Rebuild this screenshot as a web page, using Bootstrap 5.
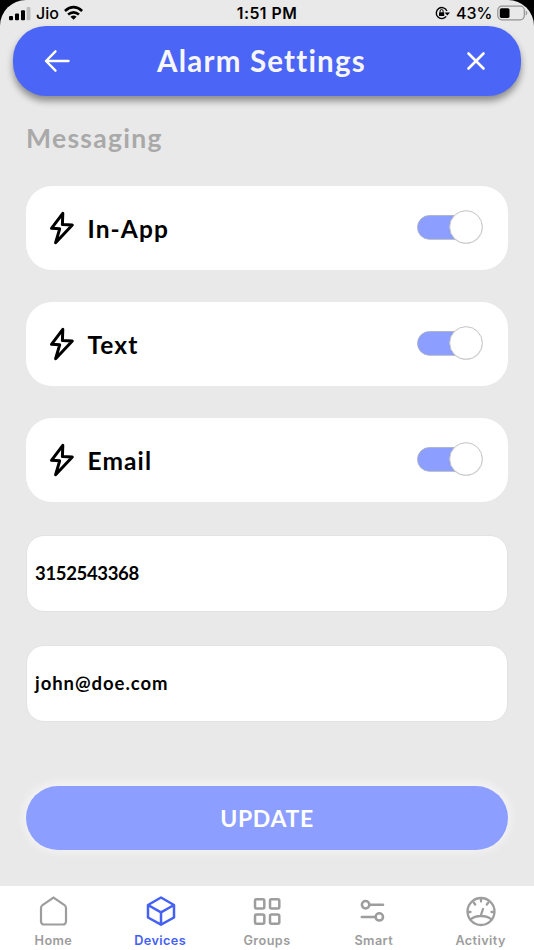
<!DOCTYPE html>
<html lang="en">
<head>
<meta charset="utf-8">
<meta name="viewport" content="width=device-width, initial-scale=1">
<title>Alarm Settings</title>
<link href="https://cdn.jsdelivr.net/npm/bootstrap@5.3.0/dist/css/bootstrap.min.css" rel="stylesheet">
<style>
body{background:#000;color:#000;font-family:Lato,"Open Sans",sans-serif;overflow:hidden}
.screen{height:950px;background:#e9e9e9;border-radius:26px 26px 0 0;overflow:hidden}
.status{height:26px;font-family:Inter,sans-serif;font-size:16px;line-height:27px}
.status>div{height:26px}
.clock{font-weight:600;font-size:15.8px;letter-spacing:.5px}
.carrier{margin-left:5px;margin-right:5px;font-weight:500}
.battery{margin-left:6px;margin-right:4px;font-weight:500}
.power{padding-right:6.5px}
.topbar{height:70px;margin:0 13px;border-radius:33px;background:#4b65f6;color:#f7f7fb;box-shadow:0 5px 7px rgba(0,0,0,.4);padding:0 33px 0 31px}
.topbar h1{font-size:29.5px;font-weight:700;line-height:70px;letter-spacing:1.2px;padding-right:12px}
.plain{background:none;border:0;color:#fff;padding:0;line-height:0}
.content{padding:0 26px}
.content h2{font-size:26.5px;font-weight:700;line-height:36px;letter-spacing:1.3px;color:#a9a9a9;margin:24px 0 30px}
.option{height:84px;border-radius:26px;background:#fff;padding:0 25px 0 21.5px;margin-bottom:32.2px}
.option label{font-size:24.5px;font-weight:700;line-height:30px;letter-spacing:1.1px;margin:1px 0 0 13px}
.toggle{width:67px;height:36px;margin-top:-2px}
.field{height:77px;border:1px solid #e2e2e2;border-radius:18px;background:#fff!important;color:#000!important;font-size:18.5px;font-weight:700;padding:0 8px 0 4px;text-indent:4px;box-shadow:none!important;margin-bottom:33px}
.phone{letter-spacing:-.35px}
.mail{letter-spacing:.95px}
.update{height:64px;border:0;border-radius:32px;background:#8c9eff!important;color:#fff!important;font-size:23px;font-weight:700;letter-spacing:.65px;margin-top:64px;padding:2px 0 0;box-shadow:0 -1px 10px 3px rgba(255,255,255,.5)}
.tabs{height:64px;background:#fff;font-family:Inter,sans-serif;font-size:12.7px;font-weight:600;letter-spacing:.4px}
.tabs a{width:20%;color:#9d9d9d;text-decoration:none;padding-top:9px;line-height:18px}
.tabs a.active{color:#4560f5}
.tabs svg{margin-bottom:4.5px}
svg{display:block;flex-shrink:0}
</style>
<script src="https://cdn.jsdelivr.net/npm/bootstrap@5.3.0/dist/js/bootstrap.bundle.min.js"></script>
</head>
<body>
<svg width="0" height="0" class="position-absolute"><defs>
<g id="bolt"><path d="M14.8 2.3 3.5 17.3l8.2.5-4.1 13.9L24.3 14l-9.9-.5Z" fill="none" stroke="#000" stroke-width="3" stroke-linejoin="round"/></g>
<g id="switch"><rect x="1.500" y="6.500" width="55" height="23.800" rx="11.900" fill="#8c9eff" stroke="#aaaebd" stroke-width=".8"/><circle cx="50" cy="18.300" r="16.800" fill="#777" opacity=".25"/><circle cx="50" cy="18" r="16.300" fill="#fff" stroke="#c8c8ca" stroke-width="1"/></g>
</defs></svg>
<div class="screen d-flex flex-column">
  <div class="status d-flex">
    <div class="d-flex align-items-center col-4 ps-2">
      <svg width="23" height="16" viewBox="0 0 23 16"><rect x="1" y="11" width="4" height="4.300" rx="1"/><rect x="7" y="8.500" width="4" height="6.800" rx="1"/><rect x="13" y="5.300" width="4" height="10" rx="1"/><rect x="18.700" y="2" width="3.700" height="13.300" rx="1" fill="#bcbcbc"/></svg>
      <span class="carrier">Jio</span>
      <svg width="21" height="16" viewBox="1 0 22 16" fill="none" stroke="#000" stroke-width="2.800"><path d="M2 5.800Q11-1.900 20 5.800M5.300 9.600Q11 4.900 16.700 9.600"/><path d="M7.800 12Q11 9.400 14.200 12L11 15.200Z" fill="#000" stroke="none"/></svg>
    </div>
    <div class="clock col-4 text-center">1:51 PM</div>
    <div class="power d-flex align-items-center justify-content-end col-4">
      <svg width="15" height="14" viewBox="0 0 15 14"><path d="M11.200 10.400A5.500 5.500 0 1 1 11.900 5" fill="none" stroke="#000" stroke-width="1.400"/><path d="M9.600 6.400H15L12.300 9.600Z"/><rect x="4" y="6.200" width="5.200" height="3.800" rx=".6"/><path d="M5.100 6.500V5a1.500 1.500 0 0 1 3 0v1.500" fill="none" stroke="#000"/></svg>
      <span class="battery">43%</span>
      <svg width="31" height="16" viewBox="0 0 31 16"><rect x=".8" y="1.200" width="26.500" height="13.600" rx="4" fill="none" stroke="#929292" stroke-width="1.200"/><rect x="2.800" y="3.200" width="9.700" height="9.700" rx="1.600"/><path d="M28.700 5.500c2.100.8 2.100 4.200 0 5Z" fill="#999"/></svg>
    </div>
  </div>
  <header class="topbar d-flex align-items-center justify-content-between">
    <button class="plain" aria-label="Back"><svg width="27" height="24" viewBox="0 0 27 24" fill="none" stroke="currentColor" stroke-width="2.400" stroke-linecap="round" stroke-linejoin="round"><path d="M24.500 12H2M11.500 2.300 2 12l9.500 9.700"/></svg></button>
    <h1 class="mb-0">Alarm Settings</h1>
    <button class="plain" aria-label="Close"><svg width="24" height="24" viewBox="0 0 24 24" fill="none" stroke="currentColor" stroke-width="2.600" stroke-linecap="round"><path d="m4.500 4.500 15 15m0-15-15 15"/></svg></button>
  </header>
  <main class="content flex-grow-1">
    <h2>Messaging</h2>
    <div class="option d-flex align-items-center"><svg width="27" height="34"><use href="#bolt"/></svg><label class="me-auto">In-App</label><svg class="toggle" role="switch" aria-checked="true"><use href="#switch"/></svg></div>
    <div class="option d-flex align-items-center"><svg width="27" height="34"><use href="#bolt"/></svg><label class="me-auto">Text</label><svg class="toggle" role="switch" aria-checked="true"><use href="#switch"/></svg></div>
    <div class="option d-flex align-items-center"><svg width="27" height="34"><use href="#bolt"/></svg><label class="me-auto">Email</label><svg class="toggle" role="switch" aria-checked="true"><use href="#switch"/></svg></div>
    <input class="field phone form-control" type="text" aria-label="Phone" value="3152543368">
    <input class="field mail form-control mb-0" type="text" aria-label="Email" value="john@doe.com">
    <button class="update btn w-100">UPDATE</button>
  </main>
  <nav class="tabs d-flex">
    <a href="#" class="d-flex flex-column align-items-center"><svg width="32" height="32" viewBox="-.5 0 32 32" fill="none" stroke="currentColor" stroke-width="2.200"><path d="M3.500 13c0-1.300.5-2.200 1.500-2.900L16 2.500l11 7.600c1 .7 1.500 1.600 1.500 2.900v13.500a3 3 0 0 1-3 3h-19a3 3 0 0 1-3-3Z"/></svg>Home</a>
    <a href="#" class="active d-flex flex-column align-items-center"><svg width="32" height="32" viewBox="-1 0 32 32" fill="none" stroke="currentColor" stroke-width="2.500" stroke-linejoin="round"><path d="M16 2.500 29 10v12.500L16 29.700 3 22.500V10Zm0 27.200V17.300M3 10l13 7.300L29 10"/></svg>Devices</a>
    <a href="#" class="d-flex flex-column align-items-center"><svg width="32" height="32" viewBox="0 0 32 32" fill="none" stroke="currentColor" stroke-width="2.500"><rect x="4" y="4.200" width="9.300" height="9.300" rx="1.500"/><rect x="19" y="4.200" width="9.300" height="9.300" rx="1.500"/><rect x="4" y="19.500" width="9.300" height="9.300" rx="1.500"/><rect x="19" y="19.500" width="9.300" height="9.300" rx="1.500"/></svg>Groups</a>
    <a href="#" class="d-flex flex-column align-items-center"><svg width="32" height="32" viewBox="1.200 0 32 32" fill="none" stroke="currentColor" stroke-width="2.500" stroke-linecap="round"><circle cx="8.800" cy="9.800" r="3.700"/><path d="M13 9.800h13.200M5 21.900h13.200"/><circle cx="22.500" cy="21.900" r="3.700"/></svg>Smart</a>
    <a href="#" class="d-flex flex-column align-items-center"><svg width="32" height="32" viewBox="0 0 32 32" fill="none" stroke="currentColor" stroke-width="2.300" stroke-linecap="round"><circle cx="16" cy="16.500" r="13.500"/><path d="M5.500 24.500c5-4.700 16-4.700 21 0M15.800 20.500l2.200-6.500M16 3.500v3M8.700 7.500l1.500 2M23.300 7.500l-1.500 2M3.500 17h2M26.500 17h2"/></svg>Activity</a>
  </nav>
</div>
</body>
</html>
